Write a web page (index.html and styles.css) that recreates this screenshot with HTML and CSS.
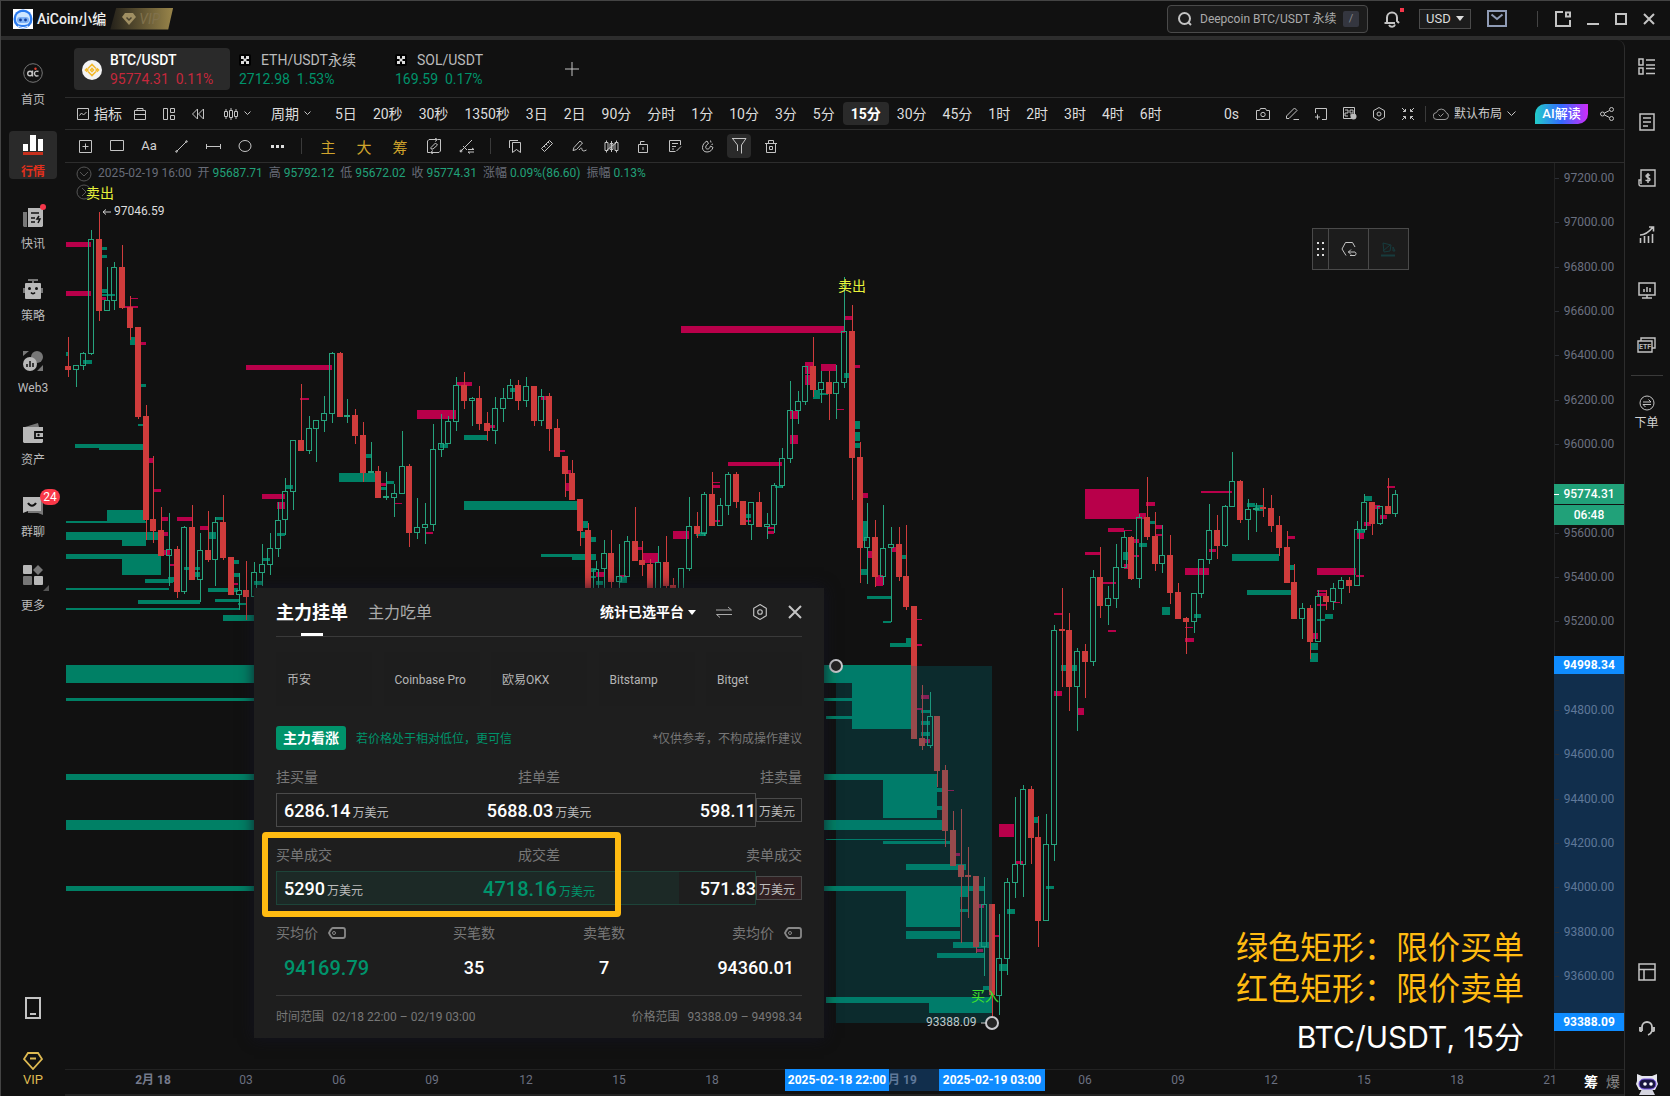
FILE: index.html
```html
<!DOCTYPE html>
<html lang="zh-CN">
<head>
<meta charset="utf-8">
<title>AiCoin - BTC/USDT</title>
<link rel="stylesheet" href="styles.css">
</head>
<body>
<div class="app">
  <header class="titlebar">
    <svg class="avatar" viewBox="0 0 20 20"><rect width="20" height="20" fill="#fff"/><circle cx="10" cy="10" r="9.5" fill="#2b7bf0"/><path d="M3 10c0-5 3-7 7-7s7 2 7 7-3 6-7 6-7-1-7-6z" fill="#cfe6ff"/><rect x="4" y="8" width="12" height="6" rx="3" fill="#7fb2f6"/><circle cx="7.5" cy="11" r="1.4" fill="#153f9c"/><circle cx="12.5" cy="11" r="1.4" fill="#153f9c"/><path d="M5 17c3 2 7 2 10 0" stroke="#fff" fill="none"/></svg>
    <span class="user-name">AiCoin小编</span>
    <span class="vip-badge"><svg width="14" height="12" viewBox="0 0 14 12"><path d="M3 0h8l3 4-7 8-7-8z" fill="#a08f62" stroke="none"/><path d="M4.500 4.500 7 7l2.500-2.500" stroke="#4a4330" stroke-width="1.500" fill="none"/></svg>VIP</span>
    <div class="title-right">
      <label class="search"><svg width="14" height="14" viewBox="0 0 14 14"><circle cx="6.500" cy="6.500" r="5.500"/><path d="M10.500 10.500 13 13"/></svg><input type="text" value="Deepcoin BTC/USDT 永续" aria-label="搜索"><kbd>/</kbd></label>
      <button class="bell" aria-label="通知"><svg width="18" height="18" viewBox="0 0 18 18"><path d="M4 13V7.500a5 5 0 0 1 10 0V11l2 2M1.500 13H12M6 15c1.500 2.500 5 2.500 6-.5"/></svg><i class="dot"></i></button>
      <label class="currency"><select aria-label="货币"><option>USD</option></select><i class="caret"></i></label>
      <button class="mail" aria-label="邮件"><svg width="20" height="17" viewBox="0 0 20 17"><path d="M1 1h18v15H1zM4.500 4.500 10 9l5.500-4.500" stroke="#8f9bb5"/></svg></button>
      <i class="title-sep"></i>
      <button aria-label="布局"><svg width="16" height="16" viewBox="0 0 16 16"><path d="M8 1H1v14h14V9M11 1.500h4v4h-4z" stroke-width="2"/></svg></button>
      <button aria-label="最小化"><svg width="12" height="16" viewBox="0 0 12 16"><path d="M0 13h12" stroke-width="2"/></svg></button>
      <button aria-label="最大化"><svg width="12" height="12" viewBox="0 0 12 12"><path d="M1 1h10v10H1z" stroke-width="2"/></svg></button>
      <button aria-label="关闭"><svg width="12" height="12" viewBox="0 0 12 12"><path d="M1 1l10 10M11 1 1 11" stroke-width="2"/></svg></button>
    </div>
  </header>

  <nav class="side-left">
    <a href="#"><svg width="20" height="20" viewBox="0 0 20 20"><circle cx="10" cy="10" r="9.300" stroke="#777"/><circle cx="7" cy="10.500" r="2.300" stroke-width="1.400"/><path d="M9.500 7.500v6M15.500 8.500c-2.500-1-4 .3-4 2s1.500 3.200 4 2.200" stroke-width="1.400"/><circle cx="12.500" cy="5.800" r="1.200" fill="#e84030" stroke="none"/></svg>首页</a>
    <a href="#" class="on"><svg width="20" height="20" viewBox="0 0 20 20"><path d="M0 9h5v7H0zM7 0h6v16H7zM15 4h5v12h-5z" fill="#fff" stroke="none"/><path d="M0 17h20v3H0z" fill="#c8301d" stroke="none"/></svg>行情</a>
    <a href="#"><svg width="20" height="20" viewBox="0 0 20 20"><path d="M0 5h4v15H1L0 19z" fill="#777" stroke="none"/><path d="M5 1h15v18l-1 1H5z" fill="#b8b8b8" stroke="none"/><path d="M8 6h8M8 11h4M8 15h4M16 9l-2 3h3l-2 4" stroke="#111" stroke-width="1.500"/></svg><i class="dot"></i>快讯</a>
    <a href="#"><svg width="20" height="20" viewBox="0 0 20 20"><path d="M5 1h10M10 1v3M1 9v5M19 9v5" stroke="#777" stroke-width="2"/><rect x="2" y="4" width="16" height="16" rx="1" fill="#b8b8b8" stroke="none"/><circle cx="6.500" cy="9.500" r="1.500" fill="#111" stroke="none"/><circle cx="13.500" cy="9.500" r="1.500" fill="#111" stroke="none"/><path d="M8 13.500c1 1.500 3 1.500 4 0" stroke="#111" stroke-width="1.500"/></svg>策略</a>
    <a href="#"><svg width="20" height="20" viewBox="0 0 20 20"><circle cx="14" cy="6" r="6" fill="#777" stroke="none"/><path d="M0 0h6L0 5zM20 14v6h-6z" fill="#777" stroke="none"/><circle cx="7" cy="13" r="7" fill="#b8b8b8" stroke="none"/><path d="M4 13v3M7 10v6M10 12v4" stroke="#111" stroke-width="1.500"/></svg>Web3</a>
    <a href="#"><svg width="20" height="20" viewBox="0 0 20 20"><path d="M2 4 15 0l1 4z" fill="#777" stroke="none"/><path d="M0 4h20v15l-1 1H1l-1-1z" fill="#b8b8b8" stroke="none"/><path d="M20 9h-8v6h8" stroke="#111" stroke-width="1.800"/><circle cx="15.500" cy="12" r="1.200" fill="#111" stroke="none"/></svg>资产</a>
    <a href="#"><svg width="20" height="20" viewBox="0 0 20 20"><path d="M5 5h15v15l-5-2H5z" fill="#777" stroke="none"/><path d="M0 2h18v14H5l-5 2z" fill="#b8b8b8" stroke="none"/><path d="M5 8c2 3.500 6 3.500 8 0" stroke="#111" stroke-width="2"/></svg><b class="count">24</b>群聊</a>
    <a href="#" class="more"><svg width="20" height="20" viewBox="0 0 20 20"><rect width="9" height="9" rx="1" fill="#b8b8b8" stroke="none"/><path d="M15 0l5 5-5 5-5-5z" fill="#777" stroke="none"/><rect y="11" width="9" height="9" rx="1" fill="#777" stroke="none"/><rect x="11" y="11" width="9" height="9" rx="1" fill="#b8b8b8" stroke="none"/></svg><i class="corner"></i>更多</a>
    <a href="#" class="phone" aria-label="手机"><svg width="18" height="22" viewBox="0 0 18 22"><path d="M2 1h14v20H2zM6 17h6" stroke-width="2"/></svg></a>
    <a href="#" class="vip"><svg width="20" height="18" viewBox="0 0 20 18"><path d="M5 1h10l4 6-9 10L1 7zM7 6.500h6" stroke="#dfba52" stroke-width="1.800"/></svg>VIP</a>
  </nav>

  <main class="main">
    <div class="tabs">
      <button class="tab on"><svg class="coin" width="20" height="20" viewBox="0 0 20 20"><circle cx="10" cy="10" r="10" fill="#f4f4f4" stroke="none"/><path d="M6 8.500 10 4.500l4 4M6 11.500l4 4 4-4M3.500 10l1.200-1.200L5.900 10l-1.200 1.200zM14.100 10l1.200-1.200 1.200 1.200-1.200 1.200zM8.500 10 10 8.500l1.500 1.500-1.500 1.500z" stroke="#f3ba2f" stroke-width="1.600"/></svg><span class="pair">BTC/USDT</span><span class="quote down">95774.31&nbsp; 0.11%</span></button>
      <button class="tab"><span class="pair"><svg width="12" height="12" viewBox="0 0 12 12"><rect width="12" height="12" rx="2" fill="#000" stroke="none"/><path d="M2 2h3v3H2zM7 2h3v3H7zM4.500 4.500h3v3h-3zM2 7h3v3H2zM7 7h3v3H7z" fill="#ddd" stroke="none"/></svg>ETH/USDT永续</span><span class="quote up">2712.98&nbsp; 1.53%</span></button>
      <button class="tab"><span class="pair"><svg width="12" height="12" viewBox="0 0 12 12"><rect width="12" height="12" rx="2" fill="#000" stroke="none"/><path d="M2 2h3v3H2zM7 2h3v3H7zM4.500 4.500h3v3h-3zM2 7h3v3H2zM7 7h3v3H7z" fill="#ddd" stroke="none"/></svg>SOL/USDT</span><span class="quote up">169.59&nbsp; 0.17%</span></button>
      <button class="add" aria-label="新增"><svg width="14" height="14" viewBox="0 0 14 14"><path d="M7 0v14M0 7h14"/></svg></button>
    </div>

    <div class="bar periods">
      <button class="wide"><svg width="12" height="12" viewBox="0 0 12 12"><path d="M.5.500h11v11H.5zM2.500 7.500 4.500 5l2 2 3-3"/></svg>指标</button>
      <div class="icons">
        <button aria-label="日历"><svg width="12" height="12" viewBox="0 0 12 12"><path d="M.5 2.500h11v9H.5zM.5 6.500h11M3 2.500V.500h6v2"/></svg></button>
        <button aria-label="布局"><svg width="12" height="12" viewBox="0 0 12 12"><path d="M.5.500h4v11h-4zM7.500.5h4v4h-4zM7.500 7.500h4v4h-4z"/></svg></button>
        <button aria-label="回放"><svg width="12" height="12" viewBox="0 0 12 12"><path d="M5.500 1v10L.5 6zM11.500 1v10L6.500 6z"/></svg></button>
      </div>
      <button class="kline"><svg width="14" height="14" viewBox="0 0 14 14"><path d="M.5 4.500h3v5h-3zM5.500 3.500h3v7h-3zM10.500 4.500h3v5h-3zM2 2v2.500M2 9.500V12M7 1v2.500M7 10.500V13M12 2v2.500M12 9.500V12"/></svg><svg width="7" height="5" viewBox="0 0 7 5"><path d="M.5.500l3 3 3-3"/></svg></button>
      <button class="wide cycle">周期<svg width="7" height="5" viewBox="0 0 7 5"><path d="M.5.500l3 3 3-3"/></svg></button>
      <div class="frames"><button>5日</button><button>20秒</button><button>30秒</button><button>1350秒</button><button>3日</button><button>2日</button><button>90分</button><button>分时</button><button>1分</button><button>10分</button><button>3分</button><button>5分</button><button class="on">15分</button><button>30分</button><button>45分</button><button>1时</button><button>2时</button><button>3时</button><button>4时</button><button>6时</button></div>
      <div class="bar-right">
        <span class="delay">0s</span>
        <div class="icons">
        <button aria-label="截图"><svg width="14" height="12" viewBox="0 0 14 12"><path d="M.5 2.500h3l1-2h5l1 2h3v9H.5z"/><circle cx="7" cy="6.500" r="2.200"/></svg></button>
        <button aria-label="画笔"><svg width="13" height="13" viewBox="0 0 13 13"><path d="M.5 9 8.500 1l2.500 2.500-8 8H.5zM7.500 12.500H13"/></svg></button>
        <button aria-label="添加"><svg width="12" height="12" viewBox="0 0 12 12"><path d="M.5 5V.500h11v11H7M0 9h5M2.500 6.500v5"/></svg></button>
        <button aria-label="弹幕"><svg width="14" height="13" viewBox="0 0 14 13"><path d="M.5.500h11v11H.5zM2 3h3v3H2v3h3M7 3h3v3H7zM7 8h3"/><circle cx="10.500" cy="9.500" r="3" fill="#bbb" stroke="none"/></svg></button>
        <button aria-label="设置"><svg width="14" height="14" viewBox="0 0 14 14"><path d="M7 .5 12.500 3.700v6.600L7 13.500 1.500 10.300V3.700z"/><circle cx="7" cy="7" r="2"/></svg></button>
        <button aria-label="缩小"><svg width="12" height="12" viewBox="0 0 12 12"><path d="M0 0l3.500 3.500M3.500 1v2.500H1M12 0 8.500 3.500M8.500 1v2.500H11M0 12l3.500-3.500M1 8.500h2.500V11M12 12 8.500 8.500M8.500 11V8.500H11"/></svg></button>
        </div>
        <i class="vsep"></i>
        <button class="wide layout"><svg width="16" height="12" viewBox="0 0 16 12"><path d="M4 11.500a3.500 3.500 0 0 1-.5-7 5 5 0 0 1 9.500 0 3.600 3.600 0 0 1-1 7zM5.500 6.500l2 2 3-3" stroke="#999"/></svg>默认布局<svg width="9" height="6" viewBox="0 0 9 6"><path d="M.5.500l4 4 4-4"/></svg></button>
        <button class="ai">AI解读</button>
        <button class="share" aria-label="分享"><svg width="14" height="14" viewBox="0 0 14 14"><circle cx="2.500" cy="7" r="2"/><circle cx="11.500" cy="2.500" r="2"/><circle cx="11.500" cy="11.500" r="2"/><path d="M4.500 6 9.500 3.500M4.500 8l5 2.500"/></svg></button>
      </div>
    </div>

    <div class="bar draw">
      <button aria-label="加"><svg width="13" height="13" viewBox="0 0 13 13"><path d="M.5.500h12v12H.5zM6.500 3.500v6M3.500 6.500h6"/></svg></button>
      <button aria-label="矩形"><svg width="14" height="12" viewBox="0 0 14 12"><path d="M.5.500h13v10H.5z"/></svg></button>
      <button>Aa</button>
      <button aria-label="线段"><svg width="13" height="13" viewBox="0 0 13 13"><path d="M1.500 11.500 11.500 1.500"/><circle cx="1.500" cy="11.500" r=".8"/><circle cx="11.500" cy="1.500" r=".8"/></svg></button>
      <button aria-label="水平线"><svg width="15" height="7" viewBox="0 0 15 7"><path d="M0 3.500h15M.5 1v5M14.500 1v5"/></svg></button>
      <button aria-label="椭圆"><svg width="14" height="12" viewBox="0 0 14 12"><ellipse cx="7" cy="6" rx="6" ry="5.500"/></svg></button>
      <button aria-label="更多"><svg width="13" height="3" viewBox="0 0 13 3"><path d="M0 0h3v3H0zM5 0h3v3H5zM10 0h3v3h-3z" fill="#ddd" stroke="none"/></svg></button>
      <i class="vsep"></i>
      <button class="gold">主</button><button class="gold">大</button><button class="gold">筹</button>
      <button class="step" aria-label="切换画线"><svg width="16" height="16" viewBox="0 0 16 16"><path d="M4 14.500H1.500V3L3 1.500h8M9 0l2.500 1.500L9 3.500M12 1.500h2.500V13L13 14.500H5M7 12.500l-2.500 2L7 16M5 11V9.500L9.500 5l2 2L7 11H5z"/></svg></button>
      <button aria-label="连续"><svg width="15" height="15" viewBox="0 0 15 15"><path d="M1 13 13 1M4 7l4 4M9 10.500h6L13 9M15 13H9l2 1.500"/><circle cx="2" cy="12" r="1"/></svg></button>
      <i class="vsep"></i>
      <button aria-label="书签"><svg width="13" height="13" viewBox="0 0 13 13"><path d="M.5 8V.500H9M3.500 2.500h8v10l-4-3-4 3z"/></svg></button>
      <button aria-label="尺"><svg width="12" height="12" viewBox="0 0 12 12"><path d="M.5 8.500l8-8 3 3-8 8zM3 6l1.500 1.500M5 4l1.500 1.500M7 2l1.500 1.500"/></svg></button>
      <button aria-label="手写"><svg width="15" height="12" viewBox="0 0 15 12"><path d="M1 10.500 2 7.500 8 1l2.500 2L4.500 9.500zM7 10c2-3 3-2 3-.5s2 2 4.500.5"/></svg></button>
      <button aria-label="K线"><svg width="15" height="13" viewBox="0 0 15 13"><path d="M1 2.500h3v8H1zM11 2.500h3v8h-3zM6 3.500h3v6H6zM2.500.500v2M2.500 10.500v2M7.500 1v11M12.500.500v2M12.500 10.500v2M3 10 12 3"/></svg></button>
      <button aria-label="锁"><svg width="12" height="13" viewBox="0 0 12 13"><path d="M1.500 4.500h9v8h-9zM3.500 4.500V1.500h4M6 7v3"/></svg></button>
      <button aria-label="笔记"><svg width="13" height="12" viewBox="0 0 13 12"><path d="M11.500 5V.500H.5v11h6M3 3.500h6M3 6.500h4M3 9h2M7.500 11 12 6.500"/></svg></button>
      <button aria-label="磁铁"><svg width="13" height="13" viewBox="0 0 13 13"><path d="M6 1C0 4 0 12 6 12c3.500 0 5-2 6-4.500L9.500 6C8.500 8.500 8 9 6.500 9 3.500 9 4.500 5 7.500 3.500zM9.500.500l.5 2M12 4l-1.500.500"/></svg></button>
      <button class="on" aria-label="筛选"><svg width="16" height="16" viewBox="0 0 16 16"><path d="M1 .5h14L10.500 7v8.500M6.500 13V7L1.500.500"/></svg></button>
      <button aria-label="删除"><svg width="12" height="13" viewBox="0 0 12 13"><path d="M0 3.500h12M1.500 3.500v9h9v-9M3.500 3V.500h5V3M4.500 6.500h3v3h-3z"/></svg></button>
    </div>

    <section class="chart">
      <div class="plot">
        <svg class="plot-canvas" id="plot"></svg>
        <div class="info"><span>2025-02-19 16:00</span><span>开 <b>95687.71</b></span><span>高 <b>95792.12</b></span><span>低 <b>95672.02</b></span><span>收 <b>95774.31</b></span><span>涨幅 <b>0.09%(86.60)</b></span><span>振幅 <b>0.13%</b></span></div>
        <div class="float-tool">
          <button class="grip" aria-label="拖动"><svg width="8" height="14" viewBox="0 0 8 14"><path d="M0 0h2v2H0zM5 0h2v2H5zM0 6h2v2H0zM5 6h2v2H5zM0 12h2v2H0zM5 12h2v2H5z" fill="#ddd" stroke="none"/></svg></button>
          <button aria-label="设置"><svg width="16" height="14" viewBox="0 0 16 14"><path d="M5 13.500 1 7l3.500-6.500h7L14 5M7 10h7a2 2 0 0 1 0 3.500H9M10 7.500 7.500 10l2.500 2.500"/></svg></button>
          <button aria-label="颜色"><svg width="15" height="15" viewBox="0 0 15 15"><path d="M2 1l8 2-1 6-6 1zM2 9 9 3M12 5v4h2z" stroke="#173b3d"/><path d="M0 13.500h14" stroke="#173b3d" stroke-width="2"/></svg></button>
        </div>
        <div class="legend"><p>绿色矩形：限价买单</p><p>红色矩形：限价卖单</p><p class="symbol">BTC/USDT, 15分</p></div>

        <div class="panel">
          <div class="panel-head">
            <button class="panel-tab on">主力挂单</button><button class="panel-tab">主力吃单</button>
            <label class="platform"><select aria-label="平台"><option>统计已选平台</option></select><i class="caret"></i></label>
            <button aria-label="切换"><svg width="16" height="12" viewBox="0 0 16 12"><path d="M0 4h15.500L12 1M16 8.500H.5L4 11.500" stroke="#aaa"/></svg></button>
            <button aria-label="设置"><svg width="16" height="16" viewBox="0 0 14 14"><path d="M7 .5 12.500 3.700v6.600L7 13.500 1.500 10.300V3.700z"/><circle cx="7" cy="7" r="2"/></svg></button>
            <button aria-label="关闭"><svg width="14" height="14" viewBox="0 0 14 14"><path d="M1 1l12 12M13 1 1 13" stroke-width="2"/></svg></button>
          </div>
          <div class="exchanges"><span>币安</span><span>Coinbase Pro</span><span>欧易OKX</span><span>Bitstamp</span><span>Bitget</span></div>
          <div class="signal"><b>主力看涨</b><span class="hint">若价格处于相对低位，更可信</span><span class="note">*仅供参考，不构成操作建议</span></div>
          <div class="heads"><span>挂买量</span><span>挂单差</span><span>挂卖量</span></div>
          <div class="volume"><div class="buy"><span><b>6286.14</b>万美元</span><span class="mid"><b>5688.03</b>万美元</span><span class="end"><b>598.11</b></span></div><div class="sell">万美元</div></div>
          <div class="heads"><span>买单成交</span><span>成交差</span><span>卖单成交</span></div>
          <div class="volume filled"><div class="buy"><span><b>5290</b>万美元</span><span class="mid up"><b>4718.16</b>万美元</span><span class="end"><b>571.83</b></span></div><div class="sell">万美元</div></div>
          <div class="stats heads4"><span>买均价<svg width="18" height="12" viewBox="0 0 18 12"><path d="M5 1h10q2 0 2 2v6q0 2-2 2H5Q3.500 11 1 6 3.500 1 5 1z" stroke-width="1.800"/><circle cx="6" cy="6" r="1.500"/></svg></span><span>买笔数</span><span>卖笔数</span><span>卖均价<svg width="18" height="12" viewBox="0 0 18 12"><path d="M5 1h10q2 0 2 2v6q0 2-2 2H5Q3.500 11 1 6 3.500 1 5 1z" stroke-width="1.800"/><circle cx="6" cy="6" r="1.500"/></svg></span></div>
          <div class="stats values"><b class="up">94169.79</b><b>35</b><b>7</b><b>94360.01</b></div>
          <div class="panel-foot"><span>时间范围</span><span>02/18 22:00 – 02/19 03:00</span><span class="push">价格范围</span><span>93388.09 – 94998.34</span></div>
          <i class="focus-frame"></i>
        </div>
      </div>
      <svg class="price-axis" id="prices"></svg>
      <svg class="time-axis" id="times"></svg>
      <div class="axis-corner"><button class="on">筹</button><button>爆</button></div>
    </section>
  </main>

  <aside class="side-right">
    <button aria-label="列表"><svg width="17" height="17" viewBox="0 0 17 17"><path d="M1 1h4v6H1zM1 10h4v6H1zM8 2h9M8 7h9M8 10.500h9M8 15.500h9" stroke-width="1.500"/></svg></button>
    <button aria-label="文档"><svg width="16" height="18" viewBox="0 0 16 18"><path d="M1 1h14v16H1zM4 5h8M4 9h8M4 13h5" stroke-width="1.500"/></svg></button>
    <button aria-label="资金"><svg width="18" height="18" viewBox="0 0 18 18"><path d="M3 12V1h14v16H3q-2 0-2-2v-4h2v4M12 6.500c-2-1.500-4-.8-4 .5 0 2 4 1.500 4 3.500 0 1.500-2.500 2-4.500.5M10 4v10" stroke-width="1.400"/></svg></button>
    <button aria-label="趋势"><svg width="16" height="19" viewBox="0 0 16 19"><path d="M1.500 18v-5M5.500 18v-7M9.500 18v-7M13.500 18V9M1 10c5 0 9-3 13-8M10 2h4.500v4.500" stroke-width="1.600"/></svg></button>
    <button aria-label="监控"><svg width="18" height="17" viewBox="0 0 18 17"><path d="M1 1h16v12H1zM9 13v3M4 16h10M6 10V7M9 10V5M12 10V6" stroke-width="1.500"/></svg></button>
    <button class="etf" aria-label="ETF"><svg width="19" height="16" viewBox="0 0 19 16"><path d="M1 4h14v11H1zM4 4V1h14v10h-3" stroke-width="1.400"/><text x="2" y="12">ETF</text></svg></button>
    <i class="hsep"></i>
    <button class="order"><svg width="16" height="16" viewBox="0 0 16 16"><circle cx="8" cy="8" r="7"/><path d="M4 7h8L9.500 4.500M12 9.500H4L6.500 12"/></svg>下单</button>
    <button class="low" aria-label="面板"><svg width="18" height="18" viewBox="0 0 18 18"><path d="M1 1h16v16H1zM1 6.500h16M6 6.500V17" stroke-width="1.500"/></svg></button>
    <button aria-label="客服"><svg width="16" height="16" viewBox="0 0 16 16"><path d="M3 11V7a5 5 0 0 1 10 0v4q-1 3-4 4" stroke-width="1.800"/><path d="M0 7h3v5H1L0 11zM13 7h3v4l-1 1h-2z" fill="#b9b9b9" stroke="none"/></svg></button>
    <button aria-label="助手"><svg width="24" height="22" viewBox="0 0 24 22"><path d="M2 1l5 2h10l5-2v7l1 3-3 6H4l-3-6 1-3z" fill="#e6e6ee" stroke="none"/><path d="M7 16h10l3 6H4z" fill="#d5d5e0" stroke="none"/><rect x="4" y="6" width="17" height="10" rx="5" fill="#1a1740" stroke="#7a58e8"/><circle cx="10" cy="11" r="1.800" fill="#fff" stroke="none"/><circle cx="16" cy="11" r="1.800" fill="#fff" stroke="none"/></svg></button>
  </aside>
</div>
<script src="chart.js"></script>
</body>
</html>
```
FILE: styles.css
```css
* { box-sizing: border-box; }
body { margin: 0; background: #111; color: #d2d2d2; font: 14px/20px Roboto, "Noto Sans CJK SC", sans-serif; overflow: hidden; }
button { background: none; border: 0; padding: 0; margin: 0; color: inherit; font: inherit; display: flex; align-items: center; justify-content: center; white-space: nowrap; }
svg { fill: none; stroke: #c4c4c4; flex: none; display: block; }
i { display: block; flex: none; }
p { margin: 0; }
select { appearance: none; background: none; border: 0; padding: 0; margin: 0; color: inherit; font: inherit; }
.caret { border: 4px solid transparent; border-top: 5px solid currentColor; border-bottom: 0; pointer-events: none; }
.dot { position: absolute; border-radius: 50%; width: 6px; height: 6px; background: #f5364a; }

.app { display: grid; grid-template: 39px minmax(0, 1fr) / 64px minmax(0, 1fr) 45px; height: 100vh; border-left: 1px solid #444; border-top: 1px solid #444; }
.titlebar { grid-column: 1 / -1; display: flex; align-items: center; padding-left: 12px; border-bottom: 4px solid #2d2d2d; }
.avatar { width: 20px; height: 20px; stroke: none; }
.user-name { margin-left: 4px; font-weight: 500; color: #eee; }
.vip-badge { display: flex; align-items: center; gap: 3px; height: 22px; margin-left: 4px; padding: 0 13px 0 12px; background: linear-gradient(90deg, #24211a, #99854a); color: #80714c; font-style: italic; clip-path: polygon(6px 0, 100% 0, calc(100% - 5px) 100%, 0 100%); }
.title-right { margin-left: auto; display: flex; align-items: center; padding-right: 15px; gap: 16px; }
.search { display: flex; align-items: center; width: 201px; height: 28px; padding: 0 8px 0 10px; border: 1px solid #4a4a4a; border-radius: 4px; background: #1c1c1c; }
.search svg { stroke-width: 2; }
.search input { flex: 1; min-width: 0; margin: 0 0 0 8px; padding: 0; border: 0; background: none; color: #aaa; font: 12px/20px Roboto, "Noto Sans CJK SC", sans-serif; }
.search kbd { width: 16px; height: 16px; background: #34363f; border-radius: 2px; font: 11px/16px Roboto, sans-serif; text-align: center; color: #888; }
.bell { position: relative; width: 16px; height: 24px; }
.bell svg { stroke-width: 2; }
.bell .dot { right: -4px; top: 1px; width: 4px; height: 4px; border-radius: 0; }
.currency { display: flex; align-items: center; gap: 5px; height: 20px; margin-left: 3px; padding: 0 6px; border: 1px solid #4a4a4a; background: #1c1c1c; font-size: 13px; color: #ddd; }
.mail svg { stroke-width: 2; }
.title-sep { width: 1px; height: 16px; background: #444; margin: 0 1px 0 14px; }

.side-left { display: flex; flex-direction: column; align-items: center; padding-top: 19px; }
.side-left a { position: relative; display: flex; flex-direction: column; align-items: center; gap: 7px; width: 48px; height: 48px; margin-bottom: 24px; padding-top: 4px; font-size: 12px; line-height: 20px; color: #bbb; text-decoration: none; }
.side-left .on { background: #2a2a2a; border-radius: 4px; color: #e2301c; font-weight: 700; }
.side-left .dot { right: 11px; top: 1px; }
.side-left .count { position: absolute; left: 31px; top: -2px; width: 20px; height: 16px; border-radius: 8px; background: #fa3848; color: #fff; font: 12px/16px Roboto, sans-serif; text-align: center; }
.side-left .more { padding-top: 2px; gap: 11px; }
.corner { position: absolute; right: 8px; top: 22px; border-left: 6px solid transparent; border-bottom: 6px solid #555; }
.side-left .phone { margin-top: auto; margin-bottom: 7px; }
.side-left .vip { margin-bottom: 0; gap: 0; font-size: 13px; color: #dfba52; }

.main { display: flex; flex-direction: column; min-width: 0; border-right: 1px solid #2d2d2d; border-radius: 8px 8px 0 0; }
.tabs { display: flex; align-items: center; height: 58px; padding-left: 9px; border-bottom: 1px solid #2d2d2d; }
.tab { display: grid; grid-template-rows: 19px 19px; align-content: center; justify-content: start; justify-items: start; width: 156px; height: 42px; padding: 2px 0 0 9px; font-size: 14px; line-height: 19px; color: #bbb; }
.tab.on { grid-template-columns: 28px auto; padding-left: 8px; background: #2a2a2a; border-radius: 4px; color: #fff; }
.tab.on .coin { grid-row: 1 / 3; align-self: center; }
.tab.on .pair { font-weight: 500; }
.tab .pair { display: flex; align-items: center; gap: 10px; }
.up { color: #00936b; }
.down { color: #c5283c; }
.add { width: 40px; height: 40px; margin-left: 10px; }

.bar { display: flex; align-items: center; flex: none; border-bottom: 1px solid #2d2d2d; }
.periods { height: 32px; padding: 0 10px 0 12px; color: #ddd; }
.wide { gap: 5px; }
.icons { display: flex; }
.periods > .icons { margin-left: 3px; }
.icons button { width: 29px; height: 24px; }
.kline { gap: 6px; margin-left: 12px; }
.cycle { margin-left: 20px; }
.frames { display: flex; margin-left: 16px; }
.frames button { height: 23px; padding: 0 8px; }
.frames .on { background: #2a2a2a; border-radius: 4px; color: #fff; font-weight: 700; }
.bar-right { display: flex; align-items: center; margin-left: auto; }
.delay { margin-right: 10px; }
.vsep { width: 1px; height: 16px; background: #3a3a3a; }
.bar-right > .vsep { margin: 0 7px 0 2px; }
.layout { font-size: 12px; color: #ccc; }
.ai { width: 53px; height: 20px; margin: 0 12px 0 19px; border-radius: 10px 0 10px 0; background: linear-gradient(90deg, #22cdc8, #3468ff 50%, #d02cf8); color: #fff; font-size: 13px; font-weight: 500; }
.draw { height: 33px; padding-left: 4px; font-size: 13px; }
.draw button { width: 32px; height: 24px; }
.draw .vsep { margin: 0 8px; }
.draw .gold { width: 36px; padding-top: 4px; color: #d0a42c; font-size: 15px; }
.draw .on { width: 24px; margin: 0 4px; background: #2a2a2a; border-radius: 4px; }

.chart { flex: 1; min-height: 0; display: grid; grid-template: minmax(0, 1fr) 25px / minmax(0, 1fr) 70px; border-bottom: 2px solid #222; }
.plot { position: relative; overflow: hidden; }
.plot-canvas { position: absolute; inset: 0; width: 100%; height: 100%; }
.chart svg.price-axis, .chart svg.time-axis { width: 100%; height: 100%; }
.time-axis { overflow: visible; }
.chart text { stroke: none; font-size: 12px; }
.info { position: absolute; left: 33px; top: 0; display: flex; gap: 6px; font-size: 12px; color: #686c78; white-space: nowrap; }
.info b { color: #21a179; font-weight: 400; }
.axis-corner { display: flex; align-items: center; justify-content: flex-end; gap: 8px; padding-right: 4px; color: #888; }
.axis-corner .on { color: #fff; font-weight: 700; }
.float-tool { position: absolute; right: 145px; top: 65px; display: flex; height: 42px; border: 1px solid #4a4a4a; background: #1c1c1c; }
.float-tool button { width: 40px; }
.float-tool button + button { border-left: 1px solid #4a4a4a; }
.float-tool .grip { width: 15px; }
.legend { position: absolute; right: 30px; bottom: 11px; text-align: right; font: 400 32px/41px "Noto Sans CJK SC", sans-serif; color: #fb1; }
.legend .symbol { margin-top: 10px; font: 400 30px/41px Inter, "Noto Sans CJK SC", sans-serif; color: #fff; }

.panel { position: absolute; left: 189px; top: 425px; width: 570px; padding: 0 22px; background: #1e1e1e; box-shadow: 0 0 14px rgba(20, 20, 34, .9); }
.panel-head { display: flex; height: 49px; border-bottom: 1px solid #3a3a3a; }
.panel-tab { padding-top: 2px; font-size: 16px; margin-right: 20px; color: #aaa; }
.panel-tab.on { font-size: 18px; font-weight: 700; color: #fff; background: linear-gradient(#fff, #fff) bottom / 22px 3px no-repeat; }
.platform { display: flex; align-items: center; gap: 4px; margin-left: auto; color: #fff; font-weight: 700; }
.panel-head > button:not(.panel-tab) { margin-left: 20px; }
.exchanges { display: grid; grid-template-columns: repeat(5, 96px); justify-content: space-between; margin-top: 15px; }
.exchanges span { height: 54px; padding-left: 11px; background: #1d1d1d; font-size: 12px; line-height: 56px; color: #b5b5b5; }
.signal { display: flex; align-items: center; height: 24px; margin-top: 20px; font-size: 12px; }
.signal b { width: 70px; margin-right: 10px; border-radius: 3px; background: #00936b; color: #fff; font-size: 14px; line-height: 24px; text-align: center; }
.signal span { line-height: 20px; padding-top: 2px; }
.hint { color: #00936b; }
.note { margin-left: auto; color: #777; }
.heads { display: grid; grid-template-columns: 1fr auto 1fr; margin: 16px 0 4px; line-height: 24px; color: #777; }
.signal + .heads { margin-top: 15px; }
.heads span:last-child { text-align: right; }
.volume { display: flex; align-items: center; height: 34px; font-size: 12px; color: #bbb; white-space: nowrap; }
.volume b { margin-right: 2px; font-size: 18px; font-weight: 500; color: #fff; }
.buy { flex: 1; display: grid; grid-template-columns: 190px 130px 1fr; align-items: center; height: 34px; padding: 4px 0 0 7px; border: 1px solid #4a4a4a; }
.buy .mid { text-align: center; }
.buy .end { text-align: right; margin-right: -3px; }
.sell { width: 46px; height: 24px; padding-left: 2px; border: 1px solid #4a4a4a; line-height: 27px; }
.filled .buy { border-color: #1d4439; background: linear-gradient(90deg, #1c2926 84%, transparent 84%); }
.filled .sell { background: #302022; }
.volume .mid.up { color: #00936b; }
.volume .mid.up b { font-size: 20px; color: inherit; }
.stats { display: grid; grid-template-columns: 133px 130px 130px 133px; text-align: center; }
.heads4 { margin: 16px 0 4px; line-height: 24px; color: #777; }
.heads4 svg { stroke: #888; }
.heads4 span { display: flex; align-items: center; justify-content: center; gap: 10px; }
.heads4 span:first-child { justify-content: flex-start; }
.heads4 span:last-child { justify-content: flex-end; }
.values { height: 34px; }
.values b { font-size: 18px; line-height: 38px; font-weight: 500; color: #fff; }
.values b:first-child { padding-left: 8px; text-align: left; font-size: 20px; color: #00936b; }
.values b:last-child { padding-right: 8px; text-align: right; }
.panel-foot { display: flex; gap: 8px; margin-top: 12px; border-top: 1px solid #3a3a3a; font-size: 12px; line-height: 42px; color: #777; }
.push { margin-left: auto; }
.focus-frame { position: absolute; left: 8px; top: 244px; width: 359px; height: 85px; border: 6px solid #fb1; border-radius: 4px; }

.side-right { display: flex; flex-direction: column; align-items: center; padding: 6px 2px 0 0; }
.side-right button { width: 42px; height: 40px; margin-bottom: 16px; flex: none; }
.side-right .etf { margin-bottom: 9px; padding-bottom: 2px; }
.etf text { font: 700 7px Roboto, sans-serif; fill: #b9b9b9; stroke: none; }
.side-right .hsep { width: 32px; height: 1px; background: #3a3a3a; }
.side-right .order { flex-direction: column; gap: 2px; margin-top: 18px; font-size: 12px; }
.side-right .low { margin-top: auto; }
.side-right button:last-child { height: 24px; margin: 8px 0 0; }
```
FILE: chart.js
```js
const NS = 'http://www.w3.org/2000/svg';
const UP = '#26a37d', DOWN = '#cf3c3c', BID = '#008065', ASK = '#b8004a', BLUE = '#0f8cff';
const LEFT = 65, TOP = 163, AXIS_LEFT = 1554, AXIS_TOP = 1069;

function add(parent, tag, attrs, text) {
  const el = document.createElementNS(NS, tag);
  for (const k in attrs) el.setAttribute(k, attrs[k]);
  if (text !== undefined) el.textContent = text;
  parent.appendChild(el);
  return el;
}
function layer(id, dx, dy) {
  return add(document.getElementById(id), 'g', { transform: `translate(${-dx} ${-dy})`, stroke: 'none' });
}
function rect(g, x, y, w, h, fill) {
  add(g, 'rect', { x, y, width: w, height: h, fill, 'shape-rendering': 'crispEdges' });
}
function label(g, x, y, text, fill, extra) {
  return add(g, 'text', Object.assign({ x, y, fill }, extra), text);
}

// x, y, width, height of resting buy orders
const bids = `102 247 5 3,102 255 5 3,102 289 5 4,102 294 13 2,66 352 2 4,83 360 9 4,130 337 5 8,140 384 6 3,138 424 5 2,75 444 24 4,99 444 44 6,66 521 80 2,107 510 38 12,66 532 92 8,122 532 24 14,66 554 95 5,122 554 39 21,145 579 28 4,168 577 6 5,66 588 103 2,138 600 62 4,66 608 173 2,208 588 30 4,215 599 24 3,238 603 8 2,223 615 31 6,208 532 8 7,215 517 8 3,234 560 5 4,234 573 5 4,184 567 16 3,195 572 5 5,254 581 8 4,262 558 8 3,277 533 8 3,286 485 7 4,
66 665 845 18,66 698 786 3,826 716 26 3,66 774 872 6,66 820 877 10,66 886 918 5,826 997 165 6,852 665 59 64,883 774 54 44,826 839 120 1,883 841 67 3,906 864 60 6,906 887 54 40,906 931 54 8,953 942 37 6,937 953 47 5,929 997 63 16,921 710 9 3,921 721 9 4,921 732 9 4,937 788 6 4,937 806 6 4,960 887 8 10,960 909 8 3,983 986 8 4,999 964 8 7,1007 909 8 5,1046 886 8 3,1033 817 6 6,1061 665 16 6,860 569 7 6,867 596 24 3,883 621 8 2,890 643 21 4,906 638 6 6,
339 473 39 9,366 454 5 4,381 487 6 3,387 481 7 3,440 444 8 4,464 435 24 5,510 388 6 4,464 501 114 9,583 521 5 7,581 532 6 6,590 537 6 5,541 554 55 3,572 556 24 4,591 568 5 4,591 576 5 2,596 581 7 4,
619 577 8 6,696 532 10 4,745 514 6 4,775 486 7 2,844 373 5 5,813 390 7 9,820 393 8 2,855 421 5 8,855 432 5 9,855 443 5 5,863 521 4 20,901 555 5 4,
1123 552 6 8,1149 521 6 3,1139 543 8 4,1162 607 8 8,1194 614 7 4,1247 503 8 4,1255 505 8 6,1232 554 47 7,1247 590 45 5,1289 565 6 5,1310 643 8 7,1310 653 8 9,1317 619 8 2,1325 614 8 5,1357 529 8 4,1364 496 8 5`;
// resting sell orders
const asks = `66 242 25 5,66 291 25 5,102 297 4 3,130 298 8 1,123 306 15 2,138 342 8 3,148 458 6 5,154 489 7 3,162 517 6 4,177 517 15 4,200 526 8 4,162 532 6 4,164 550 6 5,169 564 5 2,234 583 4 2,262 494 23 5,277 502 8 7,246 365 86 5,
300 398 9 2,417 410 39 9,456 382 16 4,381 483 5 3,395 503 7 1,426 532 7 2,490 425 5 3,541 396 6 4,560 450 5 2,565 470 6 4,565 483 6 8,
596 572 8 5,637 547 5 3,643 553 15 10,673 531 16 8,713 482 7 1,713 485 7 3,715 520 5 2,728 462 54 4,681 326 164 7,845 316 7 4,821 364 15 7,805 362 8 12,805 375 8 10,790 411 8 8,790 435 8 9,746 520 5 2,767 527 7 2,767 531 7 3,837 409 7 1,855 365 5 3,862 493 6 5,867 551 6 7,891 547 5 5,620 575 6 2,
876 575 7 11,916 619 6 1,916 644 6 2,921 695 8 4,916 708 6 2,924 739 6 4,948 790 6 1,953 853 7 3,978 904 6 4,976 949 7 3,994 935 6 2,1015 861 8 3,999 824 15 13,1077 708 7 7,1054 691 8 5,1054 613 8 2,1103 582 13 2,1108 630 8 2,
1085 489 54 30,1139 513 7 6,1108 528 16 4,1124 530 8 1,1085 552 16 3,1133 539 6 4,1132 555 7 2,1124 564 4 5,1146 502 9 4,1155 525 7 4,1155 534 7 2,1201 491 31 2,1185 568 24 7,1209 549 7 3,1185 627 8 1,1185 638 9 4,1287 536 8 3,1317 568 39 7,1317 590 9 2,1317 593 9 3,1317 604 9 2,1312 633 6 6,1334 602 6 1,1356 575 8 2,1357 533 7 6,1364 522 7 4,1375 505 5 4,1380 515 7 4,1387 486 8 2`;
// direction, high, body top, body bottom, low
const candles = `r337 366 370 377,g365 365 370 387,g352 353 366 370,g230 239 354 355,r212 239 311 321,g267 300 311 311,g262 267 301 310,r245 267 308 309,r296 307 328 340,r327 327 417 419,r405 416 520 540,r456 519 531 543,r507 530 556 556,g513 549 556 586,r546 549 592 598,g526 527 592 594,r505 527 580 580,g533 550 580 602,r511 550 560 562,g517 522 560 586,r495 522 558 560,r557 557 595 595,g573 590 595 610,r561 590 597 620,g562 572 597 597,g544 564 573 586,g533 548 565 575,g502 520 549 557,g478 491 520 535,g440 440 492 510,r384 440 451 451,g416 428 451 454,g420 420 429 462,g396 413 421 432,g352 353 414 423,r352 353 417 417,g399 415 417 423,r409 415 436 444,r422 435 473 482,g442 471 473 473,r466 471 498 498,g472 496 498 500,g484 493 498 517,g431 466 494 494,r464 466 533 547,g498 527 533 539,g503 524 528 544,g424 449 525 531,g414 443 450 457,g416 421 444 444,g377 385 422 431,r372 385 401 409,g397 398 401 426,r386 398 424 430,r412 423 431 441,g397 408 431 444,g388 398 409 422,g379 385 399 399,r380 385 401 410,g377 386 401 407,r386 386 421 426,g389 396 421 426,r393 396 429 451,r419 428 457 457,r456 456 474 497,r460 473 500 500,r499 499 531 546,r523 530 600 610,g561 569 600 610,g540 553 569 600,r530 553 582 590,g544 576 582 590,g536 541 577 577,r507 541 561 561,r541 560 565 576,r559 564 600 600,g546 562 600 600,r536 562 586 590,r578 585 600 600,g568 568 600 600,g497 526 569 571,r512 526 534 538,g492 494 534 536,r472 494 526 526,g498 505 526 526,g472 474 506 515,r472 474 502 508,r501 501 525 525,g502 502 525 540,r492 502 527 527,g513 524 527 539,g483 485 525 533,g448 458 486 488,g381 410 459 463,g391 401 411 424,g366 366 402 405,r337 366 390 397,g371 382 390 403,r371 382 394 420,g365 382 394 419,g277 331 383 388,r305 331 458 500,r442 457 548 583,g503 537 548 584,r520 537 577 587,g505 548 577 585,g527 544 548 622,r527 544 577 581,r525 576 607 610,r606 606 739 739,r685 738 746 750,g692 716 746 748,r716 716 771 787,r765 770 831 847,r811 830 866 866,r809 865 877 943,r847 875 877 918,r876 876 947 953,g877 904 947 976,r904 904 995 1020,g914 958 996 1015,g878 882 959 975,g797 864 883 898,g785 789 865 897,r786 789 838 864,r816 837 921 947,g814 844 921 921,g625 630 845 861,r588 629 631 687,r613 630 687 711,g648 651 687 731,r644 651 662 698,g570 577 662 666,r547 577 606 618,g586 598 606 625,g544 567 599 608,g531 537 568 568,r536 537 579 580,g514 517 579 588,r477 517 537 540,r512 536 564 571,g525 555 564 573,r535 555 593 604,r583 592 619 619,r617 618 622 654,g593 593 622 633,g559 559 594 598,g504 530 560 564,r515 530 546 559,g505 506 546 547,g452 481 507 507,r480 481 520 523,g499 509 520 540,g503 508 510 532,r488 507 509 517,r495 508 526 532,r516 525 548 556,r531 547 583 583,r564 582 619 619,g603 608 619 639,r605 608 642 659,g590 596 642 642,r590 596 602 610,g583 588 602 610,g577 580 589 604,r577 580 586 593,g521 529 586 586,g494 502 530 532,r502 502 524 535,g506 506 524 525,r478 506 514 514,g490 494 514 517`;

const plot = layer('plot', LEFT, TOP);
for (const [list, color] of [[bids, BID], [asks, ASK]])
  for (const item of list.split(',')) rect(plot, ...item.trim().split(' ').map(Number), color);

candles.split(',').forEach((item, i) => {
  const [high, top, bottom, low] = item.slice(1).split(' ').map(Number);
  const x = Math.round(67.9 + 7.763 * i), color = item[0] === 'g' ? UP : DOWN;
  rect(plot, x, high, 1, top - high, color);
  rect(plot, x, bottom, 1, low - bottom, color);
  if (item[0] === 'r') rect(plot, x - 3, top, 6, Math.max(bottom - top, 2), color);
  else add(plot, 'rect', { x: x - 2.5, y: top + .5, width: 5, height: Math.max(bottom - top - 1, 1), fill: 'none', stroke: color });
});

rect(plot, 836, 666, 156, 357, 'rgba(0,114,123,.27)');
for (const y of [174, 192]) add(plot, 'circle', { cx: 84, cy: y, r: 7, stroke: '#555', fill: 'none' });
add(plot, 'path', { d: 'M80 172l4 4 4-4M82 188l4 4-4 4', stroke: '#555', fill: 'none' });
const mark = { style: 'font-size:14px' };
label(plot, 86, 198, '卖出', '#e8f23a', mark);
label(plot, 838, 291, '卖出', '#e8f23a', mark);
label(plot, 971, 1001, '买入', '#3fe02e', mark);
label(plot, 114, 215, '97046.59', '#ddd');
add(plot, 'path', { d: 'M111 212h-8M106 209.500l-3 2.500 3 2.500M981 1023h5', stroke: '#ccc', fill: 'none' });
label(plot, 926, 1026, '93388.09', '#bfc8ca');
for (const [cx, cy] of [[836, 666], [992, 1023]])
  add(plot, 'circle', { cx, cy, r: 6, fill: '#242424', stroke: '#c8c8cc', 'stroke-width': 2 });

const prices = layer('prices', AXIS_LEFT, TOP);
rect(prices, 1554, 163, 1, 906, '#222');
rect(prices, 1554, 665, 70, 358, '#112e4c');
const mid = { 'text-anchor': 'middle' }, strong = { 'text-anchor': 'middle', 'font-weight': 700 };
for (let p = 97200, i = 0; p >= 93600; p -= 200, i++) {
  const y = Math.round(178 + i * 44.33);
  if (p === 95800 || p === 95000 || p === 93400) continue;
  rect(prices, 1555, y, 4, 1, '#2a2d33');
  label(prices, 1589, y + 4, p.toFixed(2), i > 11 ? '#5f7899' : '#6b7080', mid);
}
rect(prices, 1554, 484, 70, 20, '#21a179');
rect(prices, 1554, 505, 70, 20, '#21a179');
rect(prices, 1554, 494, 5, 1, '#fff');
label(prices, 1589, 498, '95774.31', '#fff', { 'text-anchor': 'middle', 'font-weight': 500 });
label(prices, 1589, 519, '06:48', '#fff', { 'text-anchor': 'middle', 'font-weight': 500 });
for (const [y, t] of [[656, '94998.34'], [1013, '93388.09']]) {
  rect(prices, 1554, y, 70, 18, BLUE);
  label(prices, 1589, y + 13, t, '#fff', strong);
}

const times = layer('times', LEFT, AXIS_TOP);
rect(times, 65, 1069, 1559, 1, '#222');
for (const [x, t] of [[246, '03'], [339, '06'], [432, '09'], [526, '12'], [619, '15'], [712, '18'], [1085, '06'], [1178, '09'], [1271, '12'], [1364, '15'], [1457, '18'], [1550, '21']])
  label(times, x, 1084, t, '#6b7080', mid);
label(times, 153, 1084, '2月 18', '#757a8c', strong);
rect(times, 836, 1069, 156, 22, '#112e4c');
label(times, 899, 1084, '2月 19', '#5f7899', strong);
for (const [x, w, t] of [[785, 104, '2025-02-18 22:00'], [939, 106, '2025-02-19 03:00']]) {
  rect(times, x, 1069, w, 22, BLUE);
  label(times, x + w / 2, 1084, t, '#fff', strong);
}
```
